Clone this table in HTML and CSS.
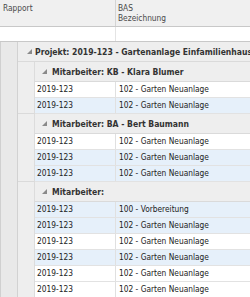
FILE: index.html
```html
<!DOCTYPE html>
<html>
<head>
<meta charset="utf-8">
<link rel="stylesheet" href="styles.css">
</head>
<body>
<div class="grid">
  <div class="head">
    <div class="hc c1">Rapport</div>
    <div class="hc c2">BAS<br>Bezeichnung</div>
  </div>
  <div class="filter">
    <div class="fc c1"></div>
    <div class="fc c2"></div>
  </div>
  <div class="body">
    <div class="ind"></div>
    <div class="lvl">
      <div class="ghead g1"><svg class="tri" width="5" height="5" viewBox="0 0 5 5"><polygon points="5,0 5,5 0,5"/></svg><span>Projekt: 2019-123 - Gartenanlage Einfamilienhaus</span></div>

      <div class="sub">
        <div class="ind2"></div>
        <div class="lvl2">
          <div class="ghead g2"><svg class="tri" width="5" height="5" viewBox="0 0 5 5"><polygon points="5,0 5,5 0,5"/></svg><span>Mitarbeiter: KB - Klara Blumer</span></div>
          <div class="row"><div class="dc c1">2019-123</div><div class="dc c2">102 - Garten Neuanlage</div></div>
          <div class="row alt"><div class="dc c1">2019-123</div><div class="dc c2">102 - Garten Neuanlage</div></div>
        </div>
      </div>

      <div class="sub">
        <div class="ind2"></div>
        <div class="lvl2">
          <div class="ghead g2"><svg class="tri" width="5" height="5" viewBox="0 0 5 5"><polygon points="5,0 5,5 0,5"/></svg><span>Mitarbeiter: BA - Bert Baumann</span></div>
          <div class="row"><div class="dc c1">2019-123</div><div class="dc c2">102 - Garten Neuanlage</div></div>
          <div class="row alt"><div class="dc c1">2019-123</div><div class="dc c2">102 - Garten Neuanlage</div></div>
          <div class="row alt"><div class="dc c1">2019-123</div><div class="dc c2">102 - Garten Neuanlage</div></div>
        </div>
      </div>

      <div class="sub">
        <div class="ind2"></div>
        <div class="lvl2">
          <div class="ghead g2"><svg class="tri" width="5" height="5" viewBox="0 0 5 5"><polygon points="5,0 5,5 0,5"/></svg><span>Mitarbeiter:</span></div>
          <div class="row alt"><div class="dc c1">2019-123</div><div class="dc c2">100 - Vorbereitung</div></div>
          <div class="row alt"><div class="dc c1">2019-123</div><div class="dc c2">102 - Garten Neuanlage</div></div>
          <div class="row"><div class="dc c1">2019-123</div><div class="dc c2">102 - Garten Neuanlage</div></div>
          <div class="row alt"><div class="dc c1">2019-123</div><div class="dc c2">102 - Garten Neuanlage</div></div>
          <div class="row"><div class="dc c1">2019-123</div><div class="dc c2">102 - Garten Neuanlage</div></div>
          <div class="row"><div class="dc c1">2019-123</div><div class="dc c2">102 - Garten Neuanlage</div></div>
        </div>
      </div>
    </div>
  </div>
</div>
</body>
</html>
```

FILE: styles.css
```css
html, body {
  margin: 0;
  padding: 0;
  background: #ffffff;
}
body {
  width: 250px;
  height: 297px;
  overflow: hidden;
  font-family: "DejaVu Sans Condensed", "DejaVu Sans", sans-serif;
  font-size: 8.3px;
  color: #222222;
}
.grid {
  width: 250px;
  overflow: hidden;
}
.head {
  display: flex;
  height: 26px;
  background: #f0f0f0;
  border-bottom: 1px solid #c8c8c8;
}
.hc {
  box-sizing: border-box;
  padding: 3px 3px 0;
  line-height: 10px;
  color: #4a4a4a;
}
.c1 {
  width: 116px;
  flex: none;
  box-sizing: border-box;
  border-right: 1px solid #d4d4d4;
}
.c2 {
  flex: 1;
  min-width: 0;
}
.hc.c2 {
  padding-left: 2px;
}
.filter {
  display: flex;
  height: 14px;
  background: #ffffff;
  border-bottom: 1px solid #c8c8c8;
}
.fc.c1 {
  border-right-color: #e4e4e4;
}
.body {
  display: flex;
  background: #eeeeee;
}
.ind {
  width: 16px;
  flex: none;
  background: #e9e9e9;
  border-left: 1px solid #d0d0d0;
  border-right: 1px solid #d2d2d2;
}
.lvl {
  flex: 1;
  min-width: 0;
}
.ghead {
  height: 19px;
  display: flex;
  align-items: center;
  white-space: nowrap;
  overflow: hidden;
  font-weight: bold;
  font-size: 8.55px;
  color: #333333;
  background: #eeeeee;
  border-bottom: 1px solid #dadada;
}
.ghead .tri {
  flex: none;
  fill: #8a8a8a;
  margin-bottom: 1px;
}
.g1 {
  padding-left: 9px;
}
.g1 span {
  margin-left: 3px;
}
.g2 {
  padding-left: 7px;
}
.g2 span {
  margin-left: 5px;
}
.sub {
  display: flex;
}
.ind2 {
  width: 16px;
  flex: none;
  background: #eeeeee;
  border-right: 1px solid #dcdcdc;
  border-bottom: 1px solid #dadada;
}
.lvl2 {
  flex: 1;
  min-width: 0;
}
.row {
  display: flex;
  height: 15px;
  background: #ffffff;
  border-bottom: 1px solid #e2e2e2;
}
.row.alt {
  background: #e6f0fa;
}
.dc {
  line-height: 14px;
  white-space: nowrap;
  overflow: hidden;
  padding-left: 3px;
}
.dc.c1 {
  width: 81px;
  padding-left: 2px;
  border-right: 1px solid #e0e0e0;
}
```
